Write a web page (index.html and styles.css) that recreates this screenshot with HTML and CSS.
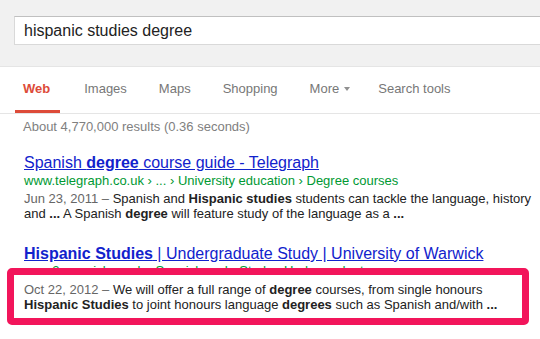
FILE: index.html
```html
<!DOCTYPE html>
<html lang="en">
<head>
    <meta charset="UTF-8">
    <meta name="viewport" content="width=device-width, initial-scale=1.0">
    <title>hispanic studies degree - Google Search</title>
    <link rel="stylesheet" href="styles.css">
</head>
<body>
    <div class="header">
        <div class="search-box">hispanic studies degree</div>
    </div>

    <div class="tabs">
        <div class="tab active">Web</div>
        <div class="tab">Images</div>
        <div class="tab">Maps</div>
        <div class="tab">Shopping</div>
        <div class="tab">More <span class="arrow"></span></div>
        <div class="tab tools">Search tools</div>
    </div>

    <div class="results">
        <div class="stats">About 4,770,000 results (0.36 seconds)</div>

        <div class="result">
            <a class="title" href="#">Spanish <b>degree</b> course guide - Telegraph</a>
            <div class="url">www.telegraph.co.uk › ... › University education › Degree courses</div>
            <div class="snippet">
                <span class="date">Jun 23, 2011 –</span> Spanish and <b>Hispanic studies</b> students can tackle the language, history<br>
                and <b>...</b> A Spanish <b>degree</b> will feature study of the language as a <b>...</b>
            </div>
        </div>

        <div class="result second">
            <a class="title" href="#"><b>Hispanic Studies</b> | Undergraduate Study | University of Warwick</a>
            <div class="url">www2.warwick.ac.uk › Spanish and › Study › Undergraduate</div>
            <div class="snippet highlight">
                <span class="date">Oct 22, 2012 –</span> We will offer a full range of <b>degree</b> courses, from single honours<br>
                <b>Hispanic Studies</b> to joint honours language <b>degrees</b> such as Spanish and/with <b>...</b>
            </div>
        </div>
    </div>
</body>
</html>
```

FILE: styles.css
```css
body {
    font-family: 'Liberation Sans', Arial, sans-serif;
    background: #fff;
    color: #222;
    margin: 0;
    padding: 0;
    width: 540px;
    height: 339px;
    overflow: hidden;
}
.header {
    background: #f1f1f1;
    height: 67px;
    border-bottom: 1px solid #e5e5e5;
    box-sizing: border-box;
    padding-top: 16px;
    padding-left: 14px;
}
.search-box {
    height: 29px;
    box-sizing: border-box;
    background: #fff;
    border: 1px solid #d9d9d9;
    border-top-color: #c0c0c0;
    border-right: none;
    padding-left: 9px;
    font-size: 16px;
    line-height: 27px;
    color: #222;
}
.tabs {
    display: flex;
    gap: 16px;
    padding-left: 15px;
    margin-top: 1px;
    border-bottom: 1px solid #e5e5e5;
}
.tab {
    font-size: 13px;
    color: #777;
    padding: 4px 8px 0;
    line-height: 34px;
    height: 38px;
    border-bottom: 3px solid transparent;
    display: flex;
    align-items: flex-start;
}
.tab.active {
    color: #dd4b39;
    font-weight: bold;
    padding-right: 10px;
    border-bottom-color: #dd4b39;
}
.tab.tools {
    margin-left: -4px;
}
.arrow {
    display: inline-block;
    width: 0;
    height: 0;
    border-left: 3.5px solid transparent;
    border-right: 3.5px solid transparent;
    border-top: 4px solid #909090;
    margin: 15px 0 0 5px;
}
.results {
    padding-left: 24px;
}
.stats {
    font-size: 13px;
    line-height: 16px;
    color: #808080;
    margin-top: 5px;
    margin-left: -1px;
}
.result {
    margin-top: 19px;
}
.result.second {
    margin-top: 24px;
}
.title {
    display: block;
    font-size: 16px;
    line-height: 18px;
    color: #1122cc;
    text-decoration: underline;
    white-space: nowrap;
}
.url {
    font-size: 13px;
    line-height: 18px;
    color: #093;
    white-space: nowrap;
}
.second .url {
    line-height: 16px;
}
.snippet {
    font-size: 13px;
    line-height: 15px;
    color: #222;
    margin-top: 1px;
    white-space: nowrap;
}
.snippet b {
    color: #222;
}
.date {
    color: #666;
}
.highlight {
    position: relative;
    background: #fff;
    border: 7px solid #f2155b;
    border-radius: 5px;
    margin: -11px 11px 0 -17px;
    padding: 7px 10px 6px;
}
```
